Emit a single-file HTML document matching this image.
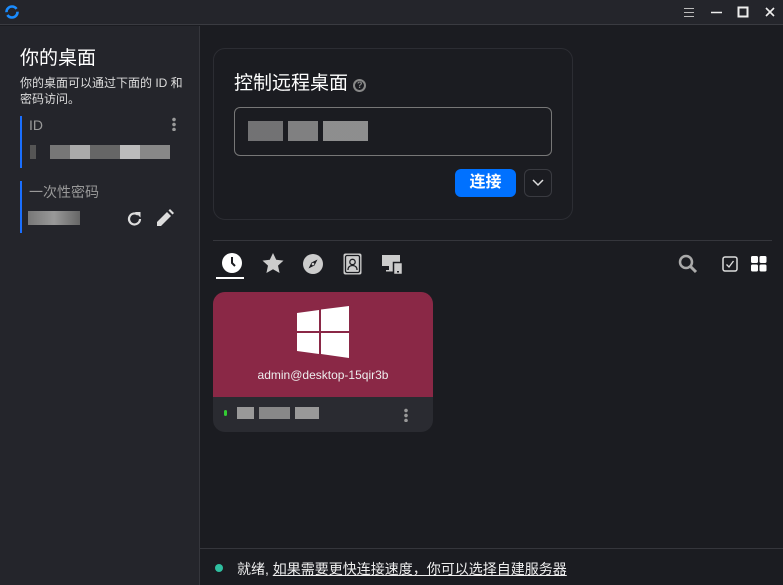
<!DOCTYPE html><html><head><meta charset="utf-8"><style>
*{margin:0;padding:0;box-sizing:border-box}
body{width:783px;height:585px;background:#1b1c21;font-family:"Liberation Sans","Noto Sans CJK SC",sans-serif;color:#fff;position:relative;overflow:hidden}
.a{position:absolute}
.px{position:absolute;background:#888}
</style></head><body>
<div class="a" style="left:0;top:0;width:783px;height:25px;background:#24252b;border-bottom:1px solid #3a3b41"></div>
<svg class="a" style="left:4px;top:4px" width="16" height="16" viewBox="0 0 16 16"><circle cx="8" cy="8" r="5.5" fill="none" stroke="#1a8cff" stroke-width="2.6" stroke-dasharray="14 3"/></svg>
<svg class="a" style="left:680px;top:4px" width="100" height="17"><path d="M4 4.5h10M4 8.5h10M4 12.5h10" stroke="#bbb" stroke-width="1"/><path d="M31 8.5h11" stroke="#eee" stroke-width="1.5"/><rect x="58.5" y="3.5" width="9" height="9" fill="none" stroke="#eee" stroke-width="2"/><path d="M86 4l8 8M94 4l-8 8" stroke="#eee" stroke-width="1.6"/></svg>
<div class="a" style="left:0;top:26px;width:200px;height:559px;background:#24252b;border-right:1px solid #35363c"></div>
<div class="a" style="left:20px;top:43px;font-size:19px">你的桌面</div>
<div class="a" style="left:20px;top:75px;font-size:12px;line-height:16px;color:#ddd;width:170px">你的桌面可以通过下面的 ID 和密码访问。</div>
<div class="a" style="left:20px;top:116px;width:2px;height:52px;background:#1a6fff"></div>
<div class="a" style="left:29px;top:117px;font-size:14px;color:#999">ID</div>
<div class="a" style="left:172px;top:117px;width:4px;height:14px;background:radial-gradient(circle,#999 1.6px,transparent 2px) 0 0/4px 5px"></div>
<div class="px" style="left:30px;top:145px;width:140px;height:14px;background:linear-gradient(90deg,#555 0 6px,transparent 6px 20px,#777 20px 40px,#aaa 40px 60px,#666 60px 90px,#bbb 90px 110px,#888 110px 140px)"></div>
<div class="a" style="left:20px;top:181px;width:2px;height:52px;background:#1a6fff"></div>
<div class="a" style="left:29px;top:182px;font-size:14px;color:#999">一次性密码</div>
<div class="px" style="left:28px;top:211px;width:52px;height:14px;background:linear-gradient(90deg,#777,#999,#666)"></div>
<svg class="a" style="left:125px;top:209px" width="20" height="20"><path d="M15 10a5.5 5.5 0 1 1-2-4.3" fill="none" stroke="#ddd" stroke-width="2.2"/><path d="M10 3h5.5v5.5z" fill="#ddd"/></svg>
<svg class="a" style="left:155px;top:208px" width="20" height="20"><path d="M2 18v-4l10-10 4 4-10 10zM13.5 2.5l4 4 1.5-1.5-4-4z" fill="#ddd"/></svg>
<div class="a" style="left:213px;top:48px;width:360px;height:172px;border:1px solid #2c2d33;border-radius:12px"></div>
<div class="a" style="left:234px;top:68px;font-size:19px">控制远程桌面 <span style="display:inline-block;width:13px;height:13px;border:2px solid #888;border-radius:50%;font-size:9px;color:#888;text-align:center;line-height:9px;font-weight:bold;vertical-align:1px">?</span></div>
<div class="a" style="left:234px;top:107px;width:318px;height:49px;border:1px solid #777;border-radius:6px"></div>
<div class="px" style="left:248px;top:121px;width:120px;height:20px;background:linear-gradient(90deg,#888 0 35px,transparent 35px 40px,#999 40px 70px,transparent 70px 75px,#aaa 75px 120px);opacity:.8"></div>
<div class="a" style="left:455px;top:169px;width:61px;height:28px;background:#0071ff;border-radius:6px;font-size:16px;font-weight:bold;text-align:center;line-height:28px">连接</div>
<div class="a" style="left:524px;top:169px;width:28px;height:28px;border:1px solid #3a3b41;border-radius:6px"></div>
<svg class="a" style="left:532px;top:178px" width="12" height="10"><path d="M1 2l5 5 5-5" stroke="#ddd" stroke-width="1.5" fill="none"/></svg>
<div class="a" style="left:213px;top:240px;width:559px;height:1px;background:#35363c"></div>
<svg class="a" style="left:221px;top:252px" width="22" height="22"><circle cx="11" cy="11" r="10" fill="#fff"/><path d="M11 5v6l3 3" stroke="#1b1c21" stroke-width="2" fill="none"/></svg>
<div class="a" style="left:216px;top:277px;width:28px;height:2px;background:#fff"></div>
<svg class="a" style="left:262px;top:253px" width="22" height="21"><path d="M11 0l3.2 6.8 7.3.8-5.5 5 1.6 7.4L11 16.3 4.4 20l1.6-7.4-5.5-5 7.3-.8z" fill="#ccc"/></svg>
<svg class="a" style="left:303px;top:254px" width="20" height="20"><circle cx="10" cy="10" r="10" fill="#ccc"/><path d="M14.5 5.5l-6 3-3 6 6-3z" fill="#1b1c21"/><circle cx="10" cy="10" r="1.3" fill="#ccc"/></svg>
<svg class="a" style="left:343px;top:253px" width="19" height="22"><rect x="0.5" y="0.5" width="18" height="21" rx="2" fill="#ccc"/><rect x="2.5" y="2.5" width="14" height="17" rx="1.5" fill="none" stroke="#1b1c21" stroke-width="1.3"/><circle cx="9.5" cy="9" r="2.7" fill="none" stroke="#1b1c21" stroke-width="1.3"/><path d="M5 17c0-3 2-4.5 4.5-4.5S14 14 14 17" fill="none" stroke="#1b1c21" stroke-width="1.3"/></svg>
<svg class="a" style="left:382px;top:255px" width="22" height="20"><path d="M0 0h18v11H11v4h3v1.5H4V15h3v-4H0z" fill="#ccc"/><rect x="11.5" y="7.5" width="9" height="12" fill="#ccc" stroke="#1b1c21" stroke-width="1.5"/><rect x="15" y="16" width="2" height="1.5" fill="#1b1c21"/></svg>
<svg class="a" style="left:678px;top:254px" width="20" height="20"><circle cx="8" cy="8" r="6" stroke="#aaa" stroke-width="2.5" fill="none"/><path d="M12 12l6 6" stroke="#aaa" stroke-width="3"/></svg>
<svg class="a" style="left:722px;top:256px" width="16" height="16"><rect x="1" y="1" width="14" height="14" rx="2" fill="none" stroke="#ddd" stroke-width="1.5"/><path d="M4.5 8.5l2.5 2.5 4.5-6" stroke="#ddd" stroke-width="1.3" fill="none"/></svg>
<svg class="a" style="left:751px;top:256px" width="16" height="16"><rect x="0" y="0" width="7" height="7" rx="1.5" fill="#fff"/><rect x="8.5" y="0" width="7" height="7" rx="1.5" fill="#fff"/><rect x="0" y="8.5" width="7" height="7" rx="1.5" fill="#fff"/><rect x="8.5" y="8.5" width="7" height="7" rx="1.5" fill="#fff"/></svg>
<div class="a" style="left:213px;top:292px;width:220px;height:140px;border-radius:12px;overflow:hidden;background:#2a2b31">
<div style="height:105px;background:#8a2846"></div></div>
<svg class="a" style="left:297px;top:306px" width="52" height="52"><path d="M0 7l22-3v21H0zM24 3.5L52 0v25H24zM0 27h22v21L0 45zM24 27h28v25l-28-4z" fill="#fff"/></svg>
<div class="a" style="left:213px;top:368px;width:220px;text-align:center;font-size:12px;color:#eee">admin@desktop-15qir3b</div>
<div class="a" style="left:224px;top:410px;width:3px;height:6px;background:#3c3;border-radius:2px"></div>
<div class="px" style="left:237px;top:407px;width:82px;height:12px;background:linear-gradient(90deg,#999 0 17px,transparent 17px 22px,#888 22px 53px,transparent 53px 58px,#999 58px 82px)"></div>
<div class="a" style="left:404px;top:408px;width:4px;height:14px;background:radial-gradient(circle,#999 1.6px,transparent 2px) 0 0/4px 5px"></div>
<div class="a" style="left:200px;top:548px;width:583px;height:1px;background:#35363c"></div>
<div class="a" style="left:215px;top:564px;width:8px;height:8px;border-radius:50%;background:#2fbfa0"></div>
<div class="a" style="left:237px;top:559px;font-size:14px;color:#eee">就绪, <span style="text-decoration:underline">如果需要更快连接速度，你可以选择自建服务器</span></div>
</body></html>
